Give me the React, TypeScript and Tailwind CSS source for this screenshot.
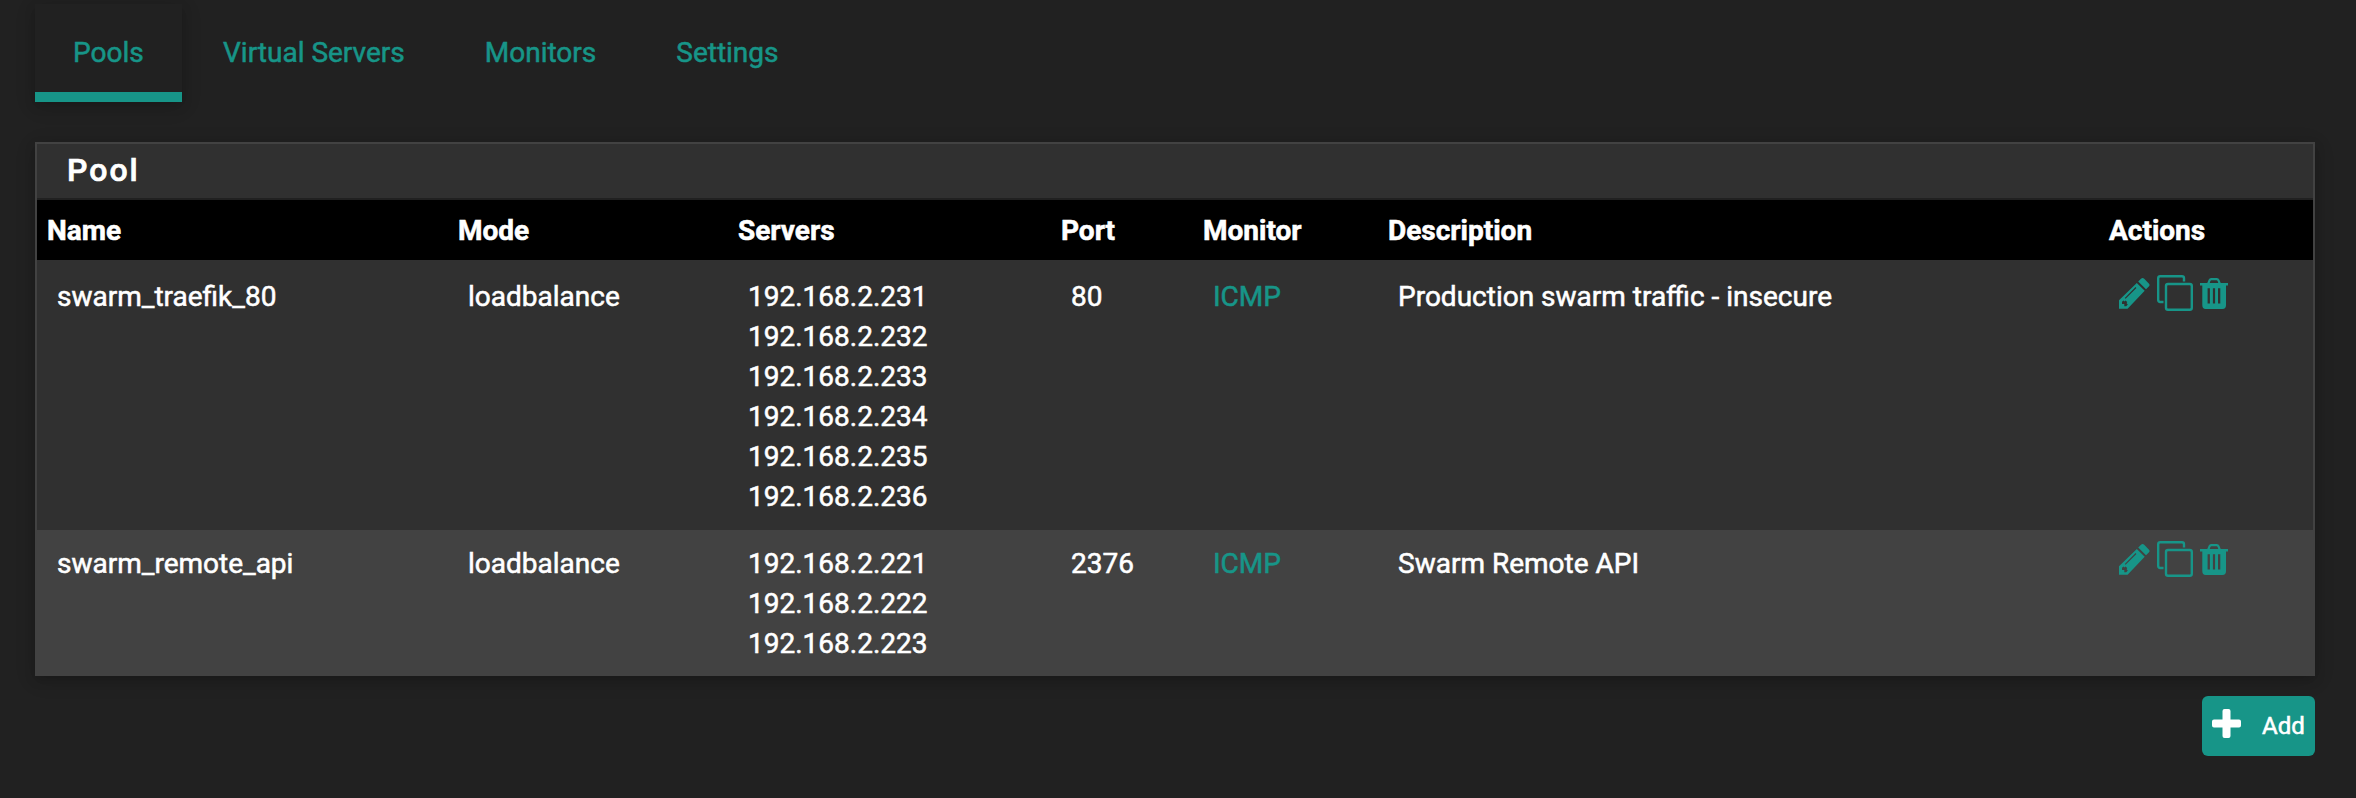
import React from "react";

const cols = "grid grid-cols-[411px_280px_323px_142px_185px_721px_1fr]";

type Pool = {
  name: string;
  mode: string;
  servers: string[];
  port: string;
  monitor: string;
  description: string;
};

const pools: Pool[] = [
  {
    name: "swarm_traefik_80",
    mode: "loadbalance",
    servers: ["192.168.2.231", "192.168.2.232", "192.168.2.233", "192.168.2.234", "192.168.2.235", "192.168.2.236"],
    port: "80",
    monitor: "ICMP",
    description: "Production swarm traffic - insecure",
  },
  {
    name: "swarm_remote_api",
    mode: "loadbalance",
    servers: ["192.168.2.221", "192.168.2.222", "192.168.2.223"],
    port: "2376",
    monitor: "ICMP",
    description: "Swarm Remote API",
  },
];

function Pencil() {
  return (
    <svg width="31" height="31" viewBox="0 0 31 31" fill="currentColor">
      <path d="M19.2 3.6 22 .8Q23.600-.7 25.200.8L29.800 5.400Q31.300 7 29.800 8.500L27 11.300Z" />
      <path
        fillRule="evenodd"
        d="M17.800 5 25.700 12.800 8.600 30.800H0V22.200ZM16.600 9.100 5.800 19.900 6.600 20.700 17.400 9.900ZM3 23.800V26H5.300V28.200H7.200L8.800 26.500 7.600 25.300 8.200 24 6.600 22.600 5.400 23.400 4.600 22.600Z"
      />
    </svg>
  );
}

function Clone() {
  return (
    <svg width="36" height="36" viewBox="0 0 36 36" fill="none" stroke="currentColor" strokeWidth="2.4">
      <path d="M6.500 27H3.200Q1.200 27 1.200 25V3.200Q1.200 1.200 3.200 1.200H25Q27 1.200 27 3.200V6.500" />
      <rect x="9" y="9" width="25.800" height="25.800" rx="2" />
    </svg>
  );
}

function Trash() {
  return (
    <svg width="28" height="31" viewBox="0 0 28 31" fill="currentColor">
      <path d="M0 5H7.300L8.600 1.800Q9.300 0 11.200 0H16.800Q18.700 0 19.400 1.800L20.700 5H28V7.400H26V27Q26 31 22.500 31H5.600Q2.300 31 2.300 27V7.400H0ZM9.700 5H18.300L17.600 2.900Q17.300 2.200 16.600 2.200H11.400Q10.700 2.200 10.400 2.900ZM7.600 10.200V25.600H9.900V10.200ZM12.900 10.200V25.600H15.100V10.200ZM18 10.200V25.600H20.300V10.200Z" fillRule="evenodd" />
    </svg>
  );
}

function Row({ pool, className, actionsClassName }: { pool: Pool; className: string; actionsClassName: string }) {
  return (
    <div className={`${cols} leading-10 ${className}`}>
      <div className="pl-5">{pool.name}</div>
      <div className="pl-5">{pool.mode}</div>
      <div className="pl-5">
        {pool.servers.map((s) => (
          <div key={s}>{s}</div>
        ))}
      </div>
      <div className="pl-5">{pool.port}</div>
      <div className="pl-5 text-[#179588]">{pool.monitor}</div>
      <div className="pl-5">{pool.description}</div>
      <div className={`flex items-start pl-5 text-[#179588] ${actionsClassName}`}>
        <span className="mt-[3px]"><Pencil /></span>
        <span className="ml-[7px]"><Clone /></span>
        <span className="mt-[3px] ml-[7px]"><Trash /></span>
      </div>
    </div>
  );
}

export default function App() {
  return (
    <div className="h-[798px] w-[2356px] overflow-hidden bg-[#212121] px-[35px] pt-1 font-['Roboto',sans-serif] text-[28px] text-white [-webkit-text-stroke:0.55px_currentColor]">
      <nav className="flex h-[98px] leading-[97px] text-[#179588]">
        <a className="w-[147px] border-b-[10px] border-[#179588] pl-[38px] shadow-[0_4px_10px_0_rgba(0,0,0,0.16),0_4px_20px_0_rgba(0,0,0,0.12)]">Pools</a>
        <a className="ml-[41px]">Virtual Servers</a>
        <a className="ml-20">Monitors</a>
        <a className="ml-20">Settings</a>
      </nav>
      <section className="mt-10 w-[2280px] border-2 border-[#424242] bg-[#303030] shadow-[0_4px_10px_0_rgba(0,0,0,0.16),0_4px_20px_0_rgba(0,0,0,0.12)]">
        <h2 className="h-14 border-b-2 border-[#212121] pl-[30px] text-[32px] leading-[52px] font-medium tracking-[2px] [-webkit-text-stroke:0.7px_currentColor]">Pool</h2>
        <div className={`${cols} h-[60px] bg-black leading-[62px] font-bold`}>
          <div className="pl-2.5">Name</div>
          <div className="pl-2.5">Mode</div>
          <div className="pl-2.5">Servers</div>
          <div className="pl-2.5">Port</div>
          <div className="pl-2.5">Monitor</div>
          <div className="pl-2.5">Description</div>
          <div className="pl-2.5">Actions</div>
        </div>
        <Row pool={pools[0]} className="h-[270px] pt-[17px]" actionsClassName="-mt-0.5" />
        <Row pool={pools[1]} className="h-36 bg-[#424242] pt-3.5" actionsClassName="-mt-[3px]" />
      </section>
      <div className="mt-5 flex w-[2280px] justify-end">
        <button className="flex h-[60px] w-[113px] items-center rounded-md bg-[#179588] pl-[10px] text-[24px]">
          <svg width="29" height="29" viewBox="0 0 29 29" fill="currentColor" className="-mt-[5px] mr-[21px]">
            <path d="M12.500 0H16.500Q18.500 0 18.500 2V10.500H27Q29 10.500 29 12.500V16.500Q29 18.500 27 18.500H18.500V27Q18.500 29 16.500 29H12.500Q10.500 29 10.500 27V18.500H2Q0 18.500 0 16.500V12.500Q0 10.500 2 10.500H10.500V2Q10.500 0 12.500 0Z" />
          </svg>
          <span>Add</span>
        </button>
      </div>
    </div>
  );
}
